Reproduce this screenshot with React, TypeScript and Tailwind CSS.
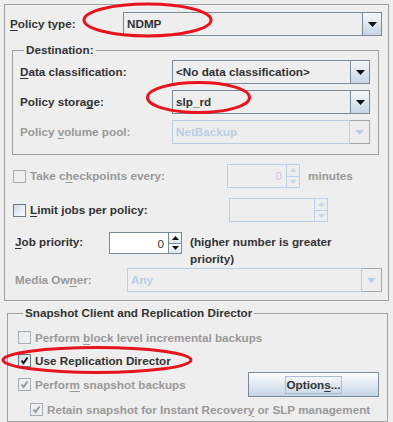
import React from 'react';

const Arrow = ({ color }: { color: string }) => (
  <svg width="9" height="5" viewBox="0 0 9 5">
    <path d="M0 0 L9 0 L4.5 5 Z" fill={color} />
  </svg>
);

const Combo = ({ value, disabled, className }: { value: string; disabled?: boolean; className: string }) =>
  disabled ? (
    <div className={`flex h-[24px] ${className}`}>
      <div className="flex flex-1 items-center border border-[#b8cfe5] bg-[#eeeeee] pl-[3px] text-[#b8cfe5]">{value}</div>
      <div className="flex w-[20px] items-center justify-center border border-l-0 border-[#a8a8a8] bg-[#eeeeee]">
        <Arrow color="#b8cfe5" />
      </div>
    </div>
  ) : (
    <div className={`flex h-[24px] border border-[#7a8a99] ${className}`}>
      <div className="flex flex-1 items-center bg-[#eeeeee] pl-[3px] text-[#333333]">{value}</div>
      <div className="flex w-[19px] items-center justify-center border-l border-[#7a8a99] bg-gradient-to-b from-[#f4f8fb] to-[#c6d6e7]">
        <Arrow color="#111111" />
      </div>
    </div>
  );

const SmallTri = ({ up, color }: { up?: boolean; color: string }) => (
  <svg width="7" height="4" viewBox="0 0 7 4">
    <path d={up ? 'M0 4 L7 4 L3.5 0 Z' : 'M0 0 L7 0 L3.5 4 Z'} fill={color} />
  </svg>
);

const Spinner = ({ value, disabled, className }: { value: string; disabled?: boolean; className: string }) => (
  <div className={`flex border ${disabled ? 'border-[#b8cfe5] bg-[#eeeeee]' : 'border-[#7a8a99] bg-white'} ${className}`}>
    <div className={`flex flex-1 items-center justify-end pr-[4px] font-normal ${disabled ? 'text-[#b8cfe5]' : 'text-[#333333]'}`}>
      {value}
    </div>
    <div className={`flex w-[13px] flex-col border-l ${disabled ? 'border-[#b8cfe5]' : 'border-[#7a8a99]'}`}>
      <div className={`flex flex-1 items-center justify-center ${disabled ? '' : 'bg-gradient-to-b from-white to-[#dde6ef]'}`}>
        <SmallTri up color={disabled ? '#c8d8e8' : '#111111'} />
      </div>
      <div className={`flex flex-1 items-center justify-center border-t ${disabled ? 'border-[#b8cfe5]' : 'border-[#7a8a99] bg-gradient-to-b from-white to-[#dde6ef]'}`}>
        <SmallTri color={disabled ? '#c8d8e8' : '#111111'} />
      </div>
    </div>
  </div>
);

const Box = ({ checked, disabled }: { checked?: boolean; disabled?: boolean }) => (
  <div
    className={`flex h-[13px] w-[13px] shrink-0 items-center justify-center border ${
      disabled ? 'border-[#a4adb7] bg-[#eeeeee]' : 'border-[#6b7a88] bg-gradient-to-br from-[#c9d8e8] to-white'
    }`}
  >
    {checked && (
      <svg width="9" height="9" viewBox="0 0 9 9">
        <path d="M1.5 4.5 L3.5 7 L7.5 1.5" stroke={disabled ? '#9a9a9a' : '#111111'} strokeWidth="2" fill="none" />
      </svg>
    )}
  </div>
);

const U = ({ children }: { children: React.ReactNode }) => <span className="underline underline-offset-2">{children}</span>;

export default function App() {
  return (
    <div className="relative h-[422px] w-[393px] overflow-hidden bg-[#eeeeee] pl-[4px] pt-[4px] text-[11.7px] font-bold leading-[14px] text-[#333333] [font-family:'Liberation_Sans',Arial,sans-serif]">
      {/* top panel */}
      <div className="h-[297px] w-[385px] border border-[#a0a0a0] pt-[7px]">
        <div className="flex items-center">
          <div className="w-[118px] pl-[5px]">
            <U>P</U>olicy type:
          </div>
          <Combo value="NDMP" className="w-[259px]" />
        </div>

        <fieldset className="ml-[7px] mt-[7px] w-[367px] border border-[#a0a0a0] px-[7px] pb-[10px] pt-[3px]">
          <legend className="ml-[4px] px-[2px] leading-[14px]">Destination:</legend>
          <div className="flex flex-col gap-[6px]">
            <div className="flex items-center">
              <div className="w-[152px]">
                <U>D</U>ata classification:
              </div>
              <Combo value="<No data classification>" className="w-[198px]" />
            </div>
            <div className="flex items-center">
              <div className="w-[152px]">
                Policy stora<U>g</U>e:
              </div>
              <Combo value="slp_rd" className="w-[198px]" />
            </div>
            <div className="flex items-center">
              <div className="w-[152px] text-[#999999]">
                Policy <U>v</U>olume pool:
              </div>
              <Combo value="NetBackup" disabled className="w-[198px]" />
            </div>
          </div>
        </fieldset>

        <div className="mt-[9px] flex h-[24px] items-center pl-[8px]">
          <div className="flex w-[214px] items-center gap-[4px] text-[#999999]">
            <Box disabled />
            <span>
              Take c<U>h</U>eckpoints every:
            </span>
          </div>
          <Spinner value="0" disabled className="h-[24px] w-[73px]" />
          <span className="ml-[8px] text-[#999999]">minutes</span>
        </div>

        <div className="mt-[10px] flex h-[24px] items-center pl-[8px]">
          <div className="flex w-[216px] items-center gap-[4px]">
            <Box />
            <span>
              <U>L</U>imit jobs per policy:
            </span>
          </div>
          <Spinner value="" disabled className="h-[24px] w-[99px]" />
        </div>

        <div className="mt-[10px] flex items-start leading-[17px]">
          <div className="w-[104px] pl-[10px] pt-[1px]">
            <U>J</U>ob priority:
          </div>
          <Spinner value="0" className="h-[22px] w-[73px]" />
          <div className="ml-[8px] pt-[1px]">
            (higher number is greater
            <br />
            priority)
          </div>
        </div>

        <div className="mt-[1px] flex items-center">
          <div className="w-[122px] pl-[10px] text-[#999999]">
            Media Ow<U>n</U>er:
          </div>
          <Combo value="Any" disabled className="w-[255px]" />
        </div>
      </div>

      {/* snapshot group */}
      <fieldset className="ml-[3px] mt-[5px] w-[381px] border border-[#a0a0a0] pl-[10px] pr-[8px] pt-[6px]">
        <legend className="ml-[5px] px-[2px] leading-[14px]">Snapshot Client and Replication Director</legend>
        <div className="flex h-[23px] items-center gap-[4px] text-[#999999]">
          <Box disabled />
          <span>
            Perform <U>b</U>lock level incremental backups
          </span>
        </div>
        <div className="flex h-[23px] items-center gap-[4px]">
          <Box checked />
          <span>Use Replication Director</span>
        </div>
        <div className="flex h-[25px] items-center">
          <div className="flex items-center gap-[4px] text-[#999999]">
            <Box checked disabled />
            <span>
              Perfor<U>m</U> snapshot backups
            </span>
          </div>
          <button className="ml-auto flex h-[25px] w-[131px] items-center justify-center border border-[#7a8a99] bg-gradient-to-b from-white to-[#c3d4e6] font-bold text-[#333333]">
            <span className="border border-[#a9bdd3] px-[1px] leading-[16px]">
              Option<U>s</U>...
            </span>
          </button>
        </div>
        <div className="mt-[1px] flex h-[23px] items-center gap-[4px] pl-[12px] text-[#999999]">
          <Box checked disabled />
          <span className="whitespace-nowrap">
            Retain snapshot for Instant Recover<U>y</U> or SLP management
          </span>
        </div>
      </fieldset>

      {/* red annotation ellipses */}
      <svg className="pointer-events-none absolute left-0 top-0" width="393" height="422">
        <ellipse cx="147.5" cy="20" rx="63.5" ry="16" fill="none" stroke="#e8141b" strokeWidth="3" />
        <ellipse cx="198.5" cy="97.5" rx="51" ry="15" fill="none" stroke="#e8141b" strokeWidth="3" />
        <ellipse cx="97" cy="360" rx="94" ry="12.5" fill="none" stroke="#e8141b" strokeWidth="3" />
      </svg>
    </div>
  );
}
